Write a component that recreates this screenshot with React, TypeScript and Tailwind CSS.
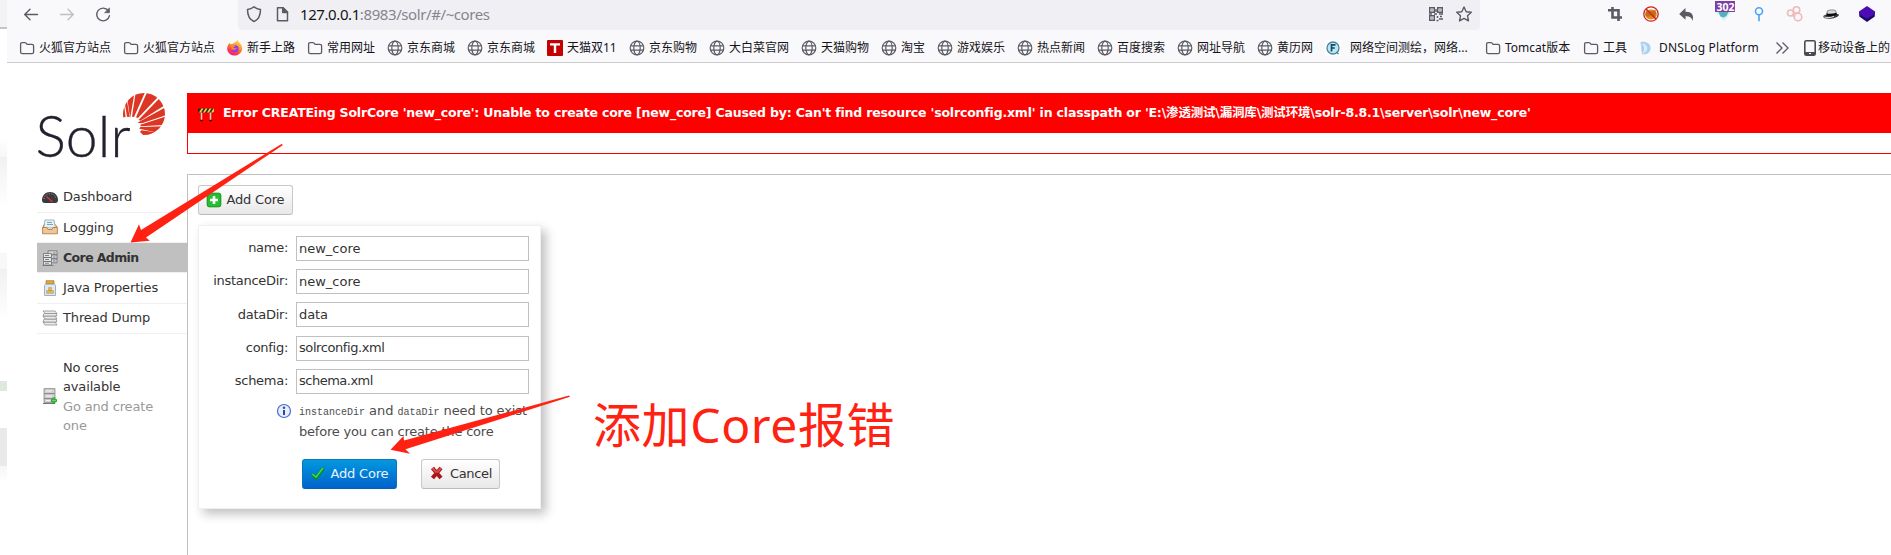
import React from "react";

type IconProps = { className?: string };

const Folder = () => (
  <svg viewBox="0 0 16 16" className="size-4 shrink-0" fill="none" stroke="#5b5b66" strokeWidth="1.3">
    <path d="M1.6 4.2c0-1 .6-1.6 1.6-1.6h2.6c.6 0 1 .2 1.3.6l1 1.2h4.9c1 0 1.6.6 1.6 1.6v6c0 1-.6 1.6-1.6 1.6H3.2c-1 0-1.6-.6-1.6-1.6z" />
  </svg>
);

const Globe = () => (
  <svg viewBox="0 0 16 16" className="size-4 shrink-0" fill="none" stroke="#5b5b66" strokeWidth="1.2">
    <circle cx="8" cy="8" r="6.8" />
    <ellipse cx="8" cy="8" rx="3.2" ry="6.8" />
    <path d="M1.4 5.8h13.2M1.4 10.2h13.2" />
  </svg>
);

const Firefox = () => (
  <svg viewBox="0 0 16 16" className="size-4 shrink-0">
    <defs>
      <linearGradient id="fx" x1="0.8" y1="0" x2="0.3" y2="1">
        <stop offset="0" stopColor="#ffe14a" />
        <stop offset="0.4" stopColor="#ff9a2b" />
        <stop offset="0.75" stopColor="#ff3750" />
        <stop offset="1" stopColor="#e6208f" />
      </linearGradient>
    </defs>
    <path d="M10.6 0c.3 1.5 1.8 2.4 3 4 2.2 3 2 6.6-.3 9-2.7 3-7.3 3.4-10.4 1C-.2 11.6-.5 7.6 1.3 4.6L2.6 2.7l1 1.5 2-.4c1-.6 3-1.3 5-3.8z" fill="url(#fx)" />
    <circle cx="8.2" cy="8.7" r="3.4" fill="#8a3ff0" />
    <path d="M3.5 5c2-.5 4 .1 5 1.7-1.6-.1-2.3.5-2 1.3 1.2.6 2.5.3 3.5-.2-.5 1.7-3 2.7-4.9 1.5C4 8 3.4 6.6 3.5 5z" fill="#ff8a2b" />
  </svg>
);

const TmallIcon = () => (
  <svg viewBox="0 0 16 16" className="size-4 shrink-0">
    <rect width="16" height="16" rx="1" fill="#c40000" />
    <path d="M3 3.2h10v2.2H9.2V13H6.8V5.4H3z" fill="#fff" />
  </svg>
);

const FofaIcon = () => (
  <svg viewBox="0 0 16 16" className="size-4 shrink-0">
    <rect width="16" height="16" fill="#fff" />
    <circle cx="8" cy="8" r="6" fill="#bfe6f5" stroke="#46869e" strokeWidth="1.3" />
    <path d="M6.5 11.5V4.8H10.5M6.5 8h3.3" stroke="#174a63" strokeWidth="1.7" fill="none" />
    <path d="M11.5 12l2 2" stroke="#46869e" strokeWidth="1.4" />
  </svg>
);

const DnsIcon = () => (
  <svg viewBox="0 0 16 16" className="size-4 shrink-0">
    <path d="M1.5 2C6 .8 11.5 3 11.5 8c0 4-3 6.3-6.5 6.5l-2-.2z" fill="#a9d2f2" />
    <path d="M2.5 3.5C6 4 8.5 5.5 8.3 8.5 8 11 6 12.5 3 14z" fill="#dcecf9" />
    <path d="M2.5 3.5L3 14l2-3.5V6.5z" fill="#a9cfee" />
  </svg>
);

type Bookmark = { icon: React.ReactNode; text: string; w: string; cls?: string };

const bookmarks: Bookmark[] = [
  { icon: <Folder />, text: "火狐官方站点", w: "w-[104px]" },
  { icon: <Folder />, text: "火狐官方站点", w: "w-[104px]" },
  { icon: <Firefox />, text: "新手上路", w: "w-[80px]" },
  { icon: <Folder />, text: "常用网址", w: "w-[80px]" },
  { icon: <Globe />, text: "京东商城", w: "w-[80px]" },
  { icon: <Globe />, text: "京东商城", w: "w-[80px]" },
  { icon: <TmallIcon />, text: "天猫双11", w: "w-[82px]" },
  { icon: <Globe />, text: "京东购物", w: "w-[80px]" },
  { icon: <Globe />, text: "大白菜官网", w: "w-[92px]" },
  { icon: <Globe />, text: "天猫购物", w: "w-[80px]" },
  { icon: <Globe />, text: "淘宝", w: "w-[56px]" },
  { icon: <Globe />, text: "游戏娱乐", w: "w-[80px]" },
  { icon: <Globe />, text: "热点新闻", w: "w-[80px]" },
  { icon: <Globe />, text: "百度搜索", w: "w-[80px]" },
  { icon: <Globe />, text: "网址导航", w: "w-[80px]" },
  { icon: <Globe />, text: "黄历网", w: "w-[68px]" },
  { icon: <FofaIcon />, text: "网络空间测绘，网络...", w: "w-[160px]", cls: "pl-[5px]" },
  { icon: <Folder />, text: "Tomcat版本", w: "w-[98px]" },
  { icon: <Folder />, text: "工具", w: "w-[56px]" },
  { icon: <DnsIcon />, text: "DNSLog Platform", w: "w-[133px]", cls: "tracking-[0.15px]" },
];

function Toolbar() {
  return (
    <div className="flex h-[30px] shrink-0 items-start">
      <svg viewBox="0 0 231 30" className="h-[30px] w-[231px] shrink-0" fill="none" strokeLinecap="round" strokeLinejoin="round">
        <path d="M30.5 14.5H18M23 9.3l-5.3 5.2L23 19.7" stroke="#5b5b66" strokeWidth="1.4" />
        <path d="M53.5 14.5H66M61 9.3l5.3 5.2L61 19.7" stroke="#bfbfc6" strokeWidth="1.4" />
        <path d="M101.3 10.7A6.4 6.4 0 1 0 102.4 15.8" stroke="#5b5b66" strokeWidth="1.4" />
        <path d="M102.4 8.3v4.4h-4.4z" fill="#5b5b66" stroke="#5b5b66" strokeWidth="0.8" />
      </svg>
      <div className="flex h-[30px] w-[1242px] shrink-0 items-start rounded-b bg-[#f0f0f4]">
        <svg viewBox="0 0 62 30" className="h-[30px] w-[62px] shrink-0" fill="none" stroke="#5b5b66" strokeWidth="1.5" strokeLinejoin="round">
          <path d="M16 6.8c-2 1.7-4.3 2.5-6.5 2.6 0 6 1.8 10 6.5 12.1 4.7-2.1 6.5-6.1 6.5-12.1-2.2-.1-4.5-.9-6.5-2.6z" />
          <path d="M39.5 7.8h5.7l4.3 4.3v8.6h-10z" />
          <path d="M44.7 7.8v4.8h4.8z" fill="#5b5b66" />
        </svg>
        <span className="flex-1 pt-px text-[15px] leading-[26px] tracking-[-0.41px] whitespace-pre text-[#85858d]">
          <span className="text-[#15141a]">127.0.0.1</span>:8983/solr/#/~cores
        </span>
        <svg viewBox="0 0 54 30" className="h-[30px] w-[54px] shrink-0" fill="none" stroke="#5b5b66">
          <g transform="translate(1)">
            <path d="M2.7 7.7h4.6v4.6H2.7zM10.7 7.7h4.6v4.6h-4.6zM2.7 15.7h4.6v4.6H2.7z" strokeWidth="1.4" />
            <path d="M4.5 10h1M12.5 10h1M4.5 18h1M2 14h3M7 14h3M12 14h4M9 9v3M10.5 16v2M12 19h4M13 16.5h2M9.5 20.5h2" strokeWidth="1.5" />
          </g>
          <path d="M38 7l2.2 4.7 5.1.6-3.8 3.5 1 5.1L38 18.4l-4.5 2.5 1-5.1-3.8-3.5 5.1-.6z" strokeWidth="1.4" strokeLinejoin="round" />
        </svg>
      </div>
      <svg viewBox="0 0 411 30" className="h-[30px] w-[411px] shrink-0">
        <g fill="none" stroke="#5b5b66" strokeWidth="2.6">
          <path d="M132.5 7v10.5H142M128 10.3h10.5V21" />
        </g>
        <ellipse cx="171" cy="14.5" rx="5.8" ry="5" fill="#e58a17" />
        <path d="M166 10l2 2 2-1 3 0 3-2v4l-1 3-3 1-1-2-3 2-3-2z" fill="#8a5214" opacity=".45" />
        <circle cx="171" cy="14" r="7.2" fill="none" stroke="#cf2222" strokeWidth="1.3" />
        <path d="M166 9l10 10" stroke="#cf2222" strokeWidth="1.4" />
        <path d="M205.5 8v3.8c6-.2 8.8 3 7 9.2-.6-3.4-2.6-5-7-4.8v3.6l-6.3-5.9z" fill="#5b5b66" />
        <path d="M235.5 11.5h16l-7.5 10z" fill="#d5f3f3" />
        <path d="M238.5 12h10l-2 4-3 1.5-3-1z" fill="#57b0b9" />
        <rect x="235" y="1" width="20" height="11" fill="#7b3fa5" />
        <text x="236.5" y="10.5" fontSize="10.5" fontWeight="700" fill="#fff" fontFamily="Noto Sans" textLength="18">302</text>
        <g fill="none" stroke="#4aa3f5" strokeWidth="1.6">
          <circle cx="279" cy="11.3" r="3.5" />
          <path d="M279 14.8v6.5" />
        </g>
        <g fill="none" stroke="#efb9bb" strokeWidth="1.6">
          <circle cx="310.5" cy="13" r="3" />
          <circle cx="316.5" cy="10" r="3.3" />
          <circle cx="318" cy="17" r="3.8" />
          <path d="M312 15l3 2M316.5 13l.5 1" />
        </g>
        <path d="M343.3 16.5c0-1.2 2-1.8 3.5-1.8l9-.7c2 0 3.4.2 3.2 1-.5 1.5-4 3.3-8.5 3.7-4 .3-7.2-.6-7.2-2.2z" fill="#3a3a3a" />
        <path d="M344.5 17c2 .8 6.5.8 9.5-.6" stroke="#eee" strokeWidth="1" fill="none" />
        <path d="M346.8 14.5l.4-3.5c2-1.3 6.5-1.5 8.5-.3l.8 3.3z" fill="#d8d8d8" stroke="#666" strokeWidth="0.7" />
        <path d="M346.6 13.2c3 1 6.8.7 9.700-.5l.5 2.100c-3 1.500-7.500 1.900-10.400.8z" fill="#0d0d0d" />
        <path d="M379.3 13.5v3L387 22l7.8-5.500v-3z" fill="#1c0a66" />
        <path d="M387 6l8 5.500v2.500l-8 4.800-8-4.800v-2.500z" fill="#4b0bb5" />
      </svg>
    </div>
  );
}

function BookmarksBar() {
  return (
    <div className="flex h-[33px] shrink-0 items-center overflow-hidden border-b border-[#cccccf] pt-1 pl-3 text-[12px] leading-4 text-[#15141a]">
      {bookmarks.map((b, i) => (
        <div key={i} className={`flex shrink-0 items-center gap-1 whitespace-nowrap ${b.w}`}>
          {b.icon}
          <span className={b.cls}>{b.text}</span>
        </div>
      ))}
      <svg viewBox="0 0 16 16" className="ml-[2px] size-4 shrink-0" fill="none" stroke="#5b5b66" strokeWidth="1.3">
        <path d="M2.5 2.5L8 8l-5.5 5.5M8.5 2.5L14 8l-5.5 5.5" />
      </svg>
      <svg viewBox="0 0 12 16" className="ml-[14px] h-4 w-3 shrink-0">
        <rect x="0.8" y="0.8" width="10.4" height="14.4" rx="1.5" fill="none" stroke="#4a4a55" strokeWidth="1.6" />
        <path d="M1 12h10v3H1z" fill="#4a4a55" />
        <path d="M5 13.5h2" stroke="#fff" />
      </svg>
      <span className="ml-[2px] whitespace-nowrap">移动设备上的</span>
    </div>
  );
}

function SolrLogo() {
  return (
    <svg viewBox="0 0 150 80" className="h-20 w-[150px]">
      <defs>
        <clipPath id="sun">
          <circle cx="342" cy="87" r="63" />
        </clipPath>
      </defs>
      <text x="-1.5" y="64" fontFamily="Lato" fontWeight="300" fontSize="57" fill="#241f2c" stroke="#241f2c" strokeWidth="0.35" textLength="95">
        Solr
      </text>
      <g transform="translate(-7 -8) scale(.33333)" fill="#dc3624">
        <g clipPath="url(#sun)">
          <path d="M276 66L282 60 287 95 279 98z" />
          <path d="M284 52L290 42 299 96 291 95z" />
          <path d="M292 42L313 26 301 97 300 97z" />
          <path d="M317 22H345L312 96 306 95z" />
          <path d="M352 20L386 34 324 99 318 97z" />
          <path d="M390 38L402 62 331 107 326 104z" />
          <path d="M404 68L410 90 336 115 322 113z" />
          <path d="M410 94L402 120 332 124 331 119z" />
          <path d="M402 124L386 144 328 131 331 126z" />
          <path d="M377 142L345 155 330 141 334 136z" />
        </g>
      </g>
    </svg>
  );
}

const GaugeIcon = () => (
  <svg viewBox="0 0 16 16" className="size-4 shrink-0">
    <path d="M0 11c0-4.5 3.5-8 8-8s8 3.5 8 8c0 1.7-1 3-2.5 3h-11C1 14 0 12.7 0 11z" fill="#3b3b3d" />
    <path d="M2 10c.3-3 2.7-5.3 6-5.3s5.7 2.3 6 5.3" fill="none" stroke="#999" strokeWidth="1" strokeDasharray="1 1.5" />
    <path d="M4.5 7.5l6 5.5" stroke="#e33" strokeWidth="1.1" />
  </svg>
);
const InboxIcon = () => (
  <svg viewBox="0 0 16 16" className="size-4 shrink-0">
    <path d="M3 1h9l1.5 8h-12z" fill="#e6f1f4" stroke="#83a4ad" strokeWidth=".8" />
    <path d="M5 3.5h5M5 5.5h6" stroke="#7fa3b0" />
    <path d="M.6 8.5l2-3M15.4 8.5l-2-3" stroke="#b57f45" />
    <path d="M.6 8.5H5l1 2h4l1-2h4.4v6.3H.6z" fill="#f0c696" stroke="#b57f45" strokeWidth=".9" />
  </svg>
);
const ServersIcon = () => (
  <svg viewBox="0 0 16 16" className="size-4 shrink-0" stroke="#6f6f6f" strokeWidth=".8">
    <path d="M6 .8h9v4H6zM6 4.8h9v4H6zM6 8.8h9v4H6z" fill="#d5d8dc" />
    <path d="M1.5 3.5h8v4h-8zM1.5 7.5h8v4h-8zM1.5 11.5h8v3.5h-8z" fill="#e3e5e8" />
    <path d="M3 5.5h4M3 9.5h4M3 13.2h4M11 3h2.5M11 7h2.5M11 11h2.5" stroke="#788494" strokeWidth="1" />
    <path d="M.5 15.5h11" />
  </svg>
);
const JarIcon = () => (
  <svg viewBox="0 0 16 16" className="size-4 shrink-0">
    <path d="M3.5 4h9l1 1.5v10h-11v-10z" fill="#dce9f7" stroke="#8ea9c8" strokeWidth=".9" />
    <path d="M4 .7h8v3H4z" fill="#e0a93c" stroke="#a87720" strokeWidth=".7" />
    <path d="M6.5 7.5h3v3h-3zM8.5 10.5h3v3h-3zM4.5 10.5h3v3h-3z" fill="#e2b75c" stroke="#b9862c" strokeWidth=".4" />
  </svg>
);
const StackIcon = () => (
  <svg viewBox="0 0 16 16" className="size-4 shrink-0" fill="#ececec" stroke="#8e8e8e" strokeWidth=".8">
    <path d="M1 12h12l2 3H3z" />
    <path d="M2 9h12l1 3H1z" />
    <path d="M1 6h12l2 3H3z" />
    <path d="M2 3.5h12L15 6H1z" />
    <path d="M1 1h12l2 2.5H3z" />
  </svg>
);

const menu = [
  { icon: <GaugeIcon />, text: "Dashboard" },
  { icon: <InboxIcon />, text: "Logging" },
  { icon: <ServersIcon />, text: "Core Admin", active: true },
  { icon: <JarIcon />, text: "Java Properties" },
  { icon: <StackIcon />, text: "Thread Dump" },
];

function Sidebar() {
  return (
    <nav className="w-[150px] shrink-0 pt-[30px]">
      <SolrLogo />
      <ul className="mt-[9.5px]">
        {menu.map((m) => (
          <li
            key={m.text}
            className={`flex h-[30.25px] items-center gap-[5px] border-b border-[#f0f0f0] pl-[5px] ${
              m.active ? "bg-[#c0c0c0] pt-px text-[12.5px] font-bold tracking-[-0.6px]" : ""
            }`}
          >
            {m.icon}
            <span>{m.text}</span>
          </li>
        ))}
      </ul>
      <div className="mt-[24px] flex items-center gap-[5px] pl-[5px] leading-[19.5px]">
        <svg viewBox="0 0 16 16" className="mt-[-19px] size-4 shrink-0 translate-y-[9px]">
          <path d="M2 .6h11v5H2zM2 5.6h11v5H2zM2 10.6h11v4H2z" fill="#cfcfd2" stroke="#888" strokeWidth=".8" />
          <path d="M4 3h6M4 8h6M4 12.5h4" stroke="#f5f5f5" />
          <path d="M1 15.5h12" stroke="#777" />
          <path d="M12 9.5v6M9 12.5h6" stroke="#159a24" strokeWidth="2.6" />
          <path d="M12 10.2v4.6M9.7 12.5h4.6" stroke="#54e05c" strokeWidth="1" />
        </svg>
        <div className="w-[100px]">
          <div>No cores available</div>
          <div className="text-[#999]">Go and create one</div>
        </div>
      </div>
    </nav>
  );
}

const BarrierIcon = () => (
  <svg viewBox="0 0 16 16" className="size-4 shrink-0">
    <path d="M3.5 4v10M12.5 4v10" stroke="#d8d2c4" strokeWidth="1.5" />
    <path d="M2 14.5h3M11 14.5h3" stroke="#3c1a12" strokeWidth="1.5" />
    <path d="M0 2.5h16v4H0z" fill="#2e2a1c" />
    <path d="M1 6.5l2.5-4h2l-2.5 4zM5 6.5l2.5-4h2l-2.5 4zM9 6.5l2.5-4h2l-2.5 4zM13 6.5l2.5-4h.5v3l-1 1z" fill="#f6cf3f" />
  </svg>
);

const PlusIcon = () => (
  <svg viewBox="0 0 16 16" className="size-4 shrink-0">
    <rect x="1.2" y="1.2" width="13.6" height="13.6" rx="2" fill="#22c02d" stroke="#158c1f" />
    <path d="M8 4v8M4 8h8" stroke="#fff" strokeWidth="2.6" />
  </svg>
);
const CheckIcon = ({ className = "" }: IconProps) => (
  <svg viewBox="0 0 16 16" className={`size-4 shrink-0 ${className}`}>
    <path d="M2 9.5L6 13 13.5 3" fill="none" stroke="#0d8a1e" strokeWidth="3.2" />
    <path d="M2.3 9L6 12.2 13 3" fill="none" stroke="#3fdc44" strokeWidth="1.6" />
  </svg>
);
const CrossIcon = () => (
  <svg viewBox="0 0 16 16" className="size-4 shrink-0">
    <path d="M3.5 3l8.5 10M12 3L3.5 13" fill="none" stroke="#a81616" strokeWidth="4" />
    <path d="M3.5 3l4 4.5M12 3L8 7.5" fill="none" stroke="#d9494b" strokeWidth="2.2" />
  </svg>
);

const fields = [
  ["name", "new_core", "tracking-[0px]"],
  ["instanceDir", "new_core", "tracking-[0px]"],
  ["dataDir", "data", "tracking-[-0.1px]"],
  ["config", "solrconfig.xml", "tracking-[-0.42px]"],
  ["schema", "schema.xml", "tracking-[-0.5px]"],
];

function CoreForm() {
  return (
    <form className="mt-[10px] ml-[10px] h-[284px] w-[343px] border border-[#f0f0f0] bg-white pt-[10px] shadow-[5px_5px_10px_#c0c0c0]">
      <div className="flex flex-col gap-[8.2px]">
        {fields.map(([label, value, tracking]) => (
          <label key={label} className="flex h-[25px] items-center">
            <span className="w-[89px] pb-px text-right tracking-[-0.28px]">{label}:</span>
            <input
              defaultValue={value}
              className={`ml-[8px] h-[25px] w-[233px] border border-[#c0c0c0] bg-white px-[2px] pb-px text-[13px] text-[#333] outline-none ${tracking}`}
            />
          </label>
        ))}
      </div>
      <div className="mt-[6px] flex pl-[77px] leading-[21px] tracking-[-0.2px] text-[#4d4d4d]">
        <svg viewBox="0 0 16 16" className="mt-[3px] size-4 shrink-0">
          <circle cx="8" cy="8" r="6.5" fill="#e9edf8" stroke="#4a6ed0" strokeWidth="1.2" />
          <path d="M8 7v5" stroke="#2447b8" strokeWidth="2" />
          <circle cx="8" cy="4.7" r="1.2" fill="#2447b8" />
        </svg>
        <div className="ml-[7px] whitespace-nowrap">
          <div className="flex h-[21px] items-baseline whitespace-pre">
            <code className="font-['Liberation_Mono'] text-[10px] tracking-[0px]">instanceDir</code>
            <span className="tracking-[-0.05px]"> and </span>
            <code className="font-['Liberation_Mono'] text-[10px] tracking-[0px]">dataDir</code>
            <span className="tracking-[-0.1px]"> need to exist</span>
          </div>
          <div>before you can create the core</div>
        </div>
      </div>
      <div className="mt-[17px] flex gap-6 pl-[103px]">
        <button type="button" className="flex h-[30px] w-[95px] items-center justify-center gap-[5px] rounded-[3px] border border-[#0576b8] border-b-[#0063b8] bg-linear-to-b from-[#0898df] to-[#0062cc] pr-px pb-px tracking-[-0.2px] text-[#e8f4ff]">
          <CheckIcon />
          Add Core
        </button>
        <button type="button" className="flex h-[30px] w-[79px] items-center justify-center gap-[5px] rounded-[3px] border border-[#c8c8c8] border-b-[#bbb] bg-linear-to-b from-white to-[#e8e8e8] pb-px tracking-[-0.3px]">
          <CrossIcon />
          Cancel
        </button>
      </div>
    </form>
  );
}

export default function App() {
  return (
    <div className="relative flex h-[555px] w-[1891px] overflow-hidden bg-white font-['Noto_Sans','Noto_Sans_CJK_SC',sans-serif]">
      <div className="flex w-[7px] shrink-0 flex-col">
        <div className="h-[27px] bg-[#f3f3f3]" />
        <div className="h-[2px] bg-[#c4c4c4]" />
        <div className="mt-[108px] h-[20px] bg-linear-to-b from-white to-[#f7f7f7]" />
        <div className="h-[50px] bg-linear-to-b from-[#f1f1f1] to-white" />
        <div className="mt-[46px] h-[16px] bg-[#f8f8f8]" />
        <div className="h-[52px] bg-linear-to-b from-[#f1f1f1] to-white" />
        <div className="mt-[60px] h-[10px] bg-[#dfe8df]" />
        <div className="mt-[37px] h-[38px] bg-[#e9e9e9]" />
        <div className="h-[16px] bg-linear-to-b from-[#f6f6f6] to-white" />
      </div>
      <div className="flex min-w-0 flex-1 flex-col">
        <header className="flex h-[63px] shrink-0 flex-col bg-[#f9f9fb]">
          <Toolbar />
          <BookmarksBar />
        </header>
        <main className="flex flex-1 pl-[30px] font-['DejaVu_Sans','Noto_Sans_CJK_SC',sans-serif] text-[13px] tracking-[-0.15px] text-[#333]">
          <Sidebar />
          <div className="flex min-w-0 flex-1 flex-col pt-[30px]">
            <div className="h-[61px] shrink-0 border border-r-0 border-[#f00]">
              <div className="flex h-[39px] items-center gap-[9px] bg-[#f00] pl-[10px] text-[12.5px] font-bold tracking-[-0.185px] whitespace-nowrap text-white">
                <BarrierIcon />
                <span>
                  Error CREATEing SolrCore 'new_core': Unable to create core [new_core] Caused by: Can't find resource 'solrconfig.xml' in classpath or 'E:\渗透测试\漏洞库\测试环境\solr-8.8.1\server\solr\new_core'
                </span>
              </div>
            </div>
            <section className="mt-5 flex-1 border-t border-l border-[#c0c0c0] pt-[10px]">
              <button type="button" className="ml-[10px] flex h-[30px] w-[95px] items-center justify-center gap-[5px] rounded-[3px] border border-[#c8c8c8] border-b-[#bbb] bg-linear-to-b from-white to-[#e8e8e8] pr-px pb-px tracking-[-0.2px]">
                <PlusIcon />
                Add Core
              </button>
              <CoreForm />
            </section>
          </div>
        </main>
      </div>
      <svg viewBox="0 0 1891 555" className="pointer-events-none absolute inset-0 h-[555px] w-[1891px]" fill="#ff2213">
        <path d="M130.5 242.5L139 224.3 141 230 281.5 144 283 145 146 237.5 149.8 240.7z" />
        <path d="M390.5 449.7L403.5 436 404 440.5 569 395.5 570 396.7 405.5 449.3 410 453.7z" />
      </svg>
      <div className="absolute top-[391px] left-[593px] text-[48px] leading-[68px] tracking-[0.6px] whitespace-nowrap text-[#ff2213]">添加Core报错</div>
    </div>
  );
}
